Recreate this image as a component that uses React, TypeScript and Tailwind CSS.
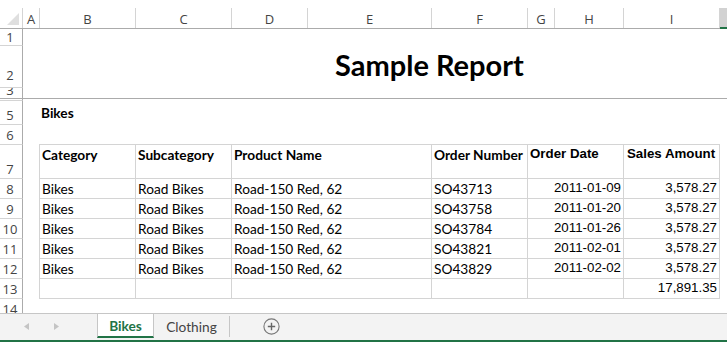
import type { ReactNode } from "react";

const columns = [
  { label: "A", width: "w-[17px]" },
  { label: "B", width: "w-[96px]" },
  { label: "C", width: "w-[96px]" },
  { label: "D", width: "w-[76px]" },
  { label: "E", width: "w-[124px]" },
  { label: "F", width: "w-[96px]" },
  { label: "G", width: "w-[27px]" },
  { label: "H", width: "w-[69px]" },
  { label: "I", width: "w-[96px]" },
];

const orders = [
  { number: "SO43713", date: "2011-01-09" },
  { number: "SO43758", date: "2011-01-20" },
  { number: "SO43784", date: "2011-01-26" },
  { number: "SO43821", date: "2011-02-01" },
  { number: "SO43829", date: "2011-02-02" },
];

// Calibri-ish cells use Lato, the right-hand numbers are Arial
const calibri = "font-['Lato',sans-serif] text-[13.7px] leading-[18px]";
const arial = "font-['Liberation_Sans',Arial,sans-serif] text-[13.3px] leading-[18px]";
const cell = "shrink-0 border-r border-b border-[#d4d4d4] overflow-hidden whitespace-nowrap";

const Row = ({
  num,
  height,
  numClass = "items-end pb-[1px]",
  line = true,
  children,
}: {
  num?: string;
  height: string;
  numClass?: string;
  line?: boolean;
  children?: ReactNode;
}) => (
  <div className={`flex shrink-0 ${height}`}>
    <div
      className={`w-[23px] shrink-0 flex justify-center pr-[2px] overflow-hidden border-r border-r-[#ababab] ${
        line ? "border-b border-b-[#d4d4d4]" : ""
      } ${numClass} font-['Open_Sans',sans-serif] text-[13px] leading-[16px] text-[#444]`}
    >
      {num}
    </div>
    <div className="flex-1 flex min-w-0">{children}</div>
  </div>
);

const TableRow = ({
  height = "h-[20px]",
  cells,
}: {
  height?: string;
  cells: [string, string, string, string, string, string];
}) => (
  <div className={`ml-[16px] flex border-l border-[#d4d4d4] ${height}`}>
    <div className={`${cell} w-[96px] pl-[2px] pt-px ${calibri}`}>{cells[0]}</div>
    <div className={`${cell} w-[96px] pl-[2px] pt-px ${calibri}`}>{cells[1]}</div>
    <div className={`${cell} w-[200px] pl-[2px] pt-px ${calibri}`}>{cells[2]}</div>
    <div className={`${cell} w-[96px] pl-[2px] pt-px ${calibri}`}>{cells[3]}</div>
    <div className={`${cell} w-[96px] pr-[2px] text-right ${arial}`}>{cells[4]}</div>
    <div className={`${cell} w-[96px] pr-[2px] text-right ${arial}`}>{cells[5]}</div>
  </div>
);

export default function App() {
  return (
    <div className="w-[727px] h-[342px] overflow-hidden bg-white flex flex-col text-black">
      <div className="h-[8px] shrink-0" />

      {/* column letters */}
      <div className="h-[21px] shrink-0 flex border-b border-[#ababab] font-['Open_Sans',sans-serif] text-[13px] leading-[20px] text-[#444]">
        <div className="w-[23px] shrink-0 flex items-end justify-end pr-[3px] pb-[3px] border-r border-[#d4d4d4]">
          <svg width="12" height="12" viewBox="0 0 12 12">
            <polygon points="12,0 12,12 0,12" fill="#dfdfdf" />
          </svg>
        </div>
        {columns.map((c) => (
          <div key={c.label} className={`${c.width} shrink-0 text-center pt-[1px] border-r border-[#d4d4d4]`}>
            {c.label}
          </div>
        ))}
        <div className="flex-1 bg-[#d2d2d2] border-b-2 border-[#217346] -mb-px" />
      </div>

      <Row num="1" height="h-[17px]" numClass="items-end pb-0" />
      <Row num="2" height="h-[42px]" numClass="items-end pb-[4px]">
        <div className="pl-[312px] pt-[2px] font-['Lato',sans-serif] font-bold text-[29px] leading-[34px] whitespace-nowrap">
          Sample Report
        </div>
      </Row>
      <Row num="3" height="h-[10px]" numClass="items-end pb-0" line={false} />
      <div className="h-[1px] shrink-0 bg-[#ababab]" />
      <Row height="h-[2px]" />
      <Row num="5" height="h-[24px]">
        <div className={`pl-[18px] pt-[3px] font-bold ${calibri}`}>Bikes</div>
      </Row>
      <Row num="6" height="h-[20px]">
        <div className="ml-[16px] w-[681px] border-b border-[#d4d4d4]" />
      </Row>
      <Row num="7" height="h-[34px]">
        <div className="ml-[16px] flex border-l border-[#d4d4d4] h-[34px]">
          <div className={`${cell} w-[96px] pl-[2px] pt-px font-bold ${calibri}`}>Category</div>
          <div className={`${cell} w-[96px] pl-[2px] pt-px font-bold ${calibri}`}>Subcategory</div>
          <div className={`${cell} w-[200px] pl-[2px] pt-px font-bold ${calibri}`}>Product Name</div>
          <div className={`${cell} w-[96px] pl-[2px] pt-px font-bold ${calibri}`}>Order Number</div>
          <div className={`${cell} w-[96px] pl-[2px] font-bold ${arial}`}>Order Date</div>
          <div className={`${cell} w-[96px] pl-[3px] font-bold ${arial}`}>Sales Amount</div>
        </div>
      </Row>
      {orders.map((o, i) => (
        <Row key={o.number} num={String(8 + i)} height="h-[20px]">
          <TableRow cells={["Bikes", "Road Bikes", "Road-150 Red, 62", o.number, o.date, "3,578.27"]} />
        </Row>
      ))}
      <Row num="13" height="h-[20px]">
        <TableRow cells={["", "", "", "", "", "17,891.35"]} />
      </Row>
      <Row num="14" height="h-[14px]" numClass="items-start pt-[2px]" line={false} />

      {/* sheet tabs */}
      <div className="h-[29px] shrink-0 flex flex-col bg-[#f3f3f3] border-t border-[#c6c6c6]">
        <div className="h-[24px] flex">
          <div className="w-[97px] shrink-0 flex items-center pl-[24px] gap-[25px]">
            <svg width="5" height="7" viewBox="0 0 5 7">
              <polygon points="5,0 5,7 0,3.5" fill="#c4c4c4" />
            </svg>
            <svg width="5" height="7" viewBox="0 0 5 7">
              <polygon points="0,0 0,7 5,3.5" fill="#c4c4c4" />
            </svg>
          </div>
          <div className="w-[57px] shrink-0 bg-white border-l border-r border-[#c6c6c6] border-b-2 border-b-[#217346] flex justify-center items-start pt-[3px]">
            <span className={`font-bold text-[#217346] ${calibri}`}>Bikes</span>
          </div>
          <div className="w-[75px] shrink-0 flex justify-center items-start pt-[4px]">
            <span className={`text-[#444] ${calibri}`}>Clothing</span>
          </div>
          <div className="w-[1px] h-[21px] mt-[2px] bg-[#c6c6c6]" />
          <div className="ml-[33px] self-center">
            <svg width="17" height="17" viewBox="0 0 17 17">
              <circle cx="8.5" cy="8.5" r="7.6" fill="none" stroke="#777" strokeWidth="1.1" />
              <path d="M8.5 4.8v7.4M4.8 8.5h7.4" stroke="#666" strokeWidth="1.4" />
            </svg>
          </div>
        </div>
        <div className="h-[2px]" />
        <div className="h-[2px] bg-[#217346]" />
      </div>
    </div>
  );
}
